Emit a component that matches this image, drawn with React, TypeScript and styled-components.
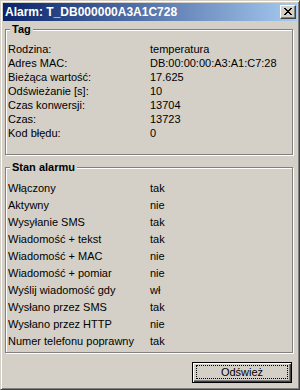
import React from "react";
import styled, { createGlobalStyle } from "styled-components";

const GlobalStyle = createGlobalStyle`
  html, body { margin: 0; padding: 0; background: #d4d0c8; }
  body { font-family: "Liberation Sans", Arial, sans-serif; font-size: 11px; color: #000; }
  * { box-sizing: border-box; }
`;

const Window = styled.div`
  width: 300px;
  height: 390px;
  border: 1px solid;
  border-color: #d4d0c8 #404040 #404040 #d4d0c8;
  box-shadow: inset 1px 1px 0 #fff, inset -1px -1px 0 #808080;
  padding: 2px;
  background: #d4d0c8;
  display: flex;
  flex-direction: column;
`;

const TitleBar = styled.div`
  height: 18px;
  display: flex;
  align-items: center;
  padding: 0 1px 0 2px;
  background: linear-gradient(to right, #0a246a, #a6caf0);
`;

const TitleText = styled.div`
  flex: 1;
  color: #fff;
  font-weight: bold;
  font-size: 12px;
  line-height: 18px;
  white-space: nowrap;
`;

const CloseButton = styled.div`
  width: 16px;
  height: 14px;
  background: #d4d0c8;
  border: 1px solid;
  border-color: #fff #404040 #404040 #fff;
  box-shadow: inset -1px -1px 0 #808080;
  display: flex;
  padding: 2px 0 0 3px;
`;

const Content = styled.div`
  display: flex;
  flex-direction: column;
  padding: 0 4px 0 2px;
`;

const Group = styled.div<{ $top: number; $bottom: number }>`
  margin-top: ${(p) => p.$top}px;
  border: 1px solid #808080;
  box-shadow: inset 1px 1px 0 #fff, 1px 1px 0 #fff;
  padding: 0 2px ${(p) => p.$bottom}px 2px;
  display: flex;
  flex-direction: column;
`;

const Caption = styled.div`
  align-self: flex-start;
  margin: -7px 0 0 2px;
  padding: 0 2px;
  height: 13px;
  line-height: 13px;
  background: #d4d0c8;
  font-weight: bold;
  font-size: 11px;
`;

const Rows = styled.div<{ $h: number }>`
  margin-top: 6px;
  display: grid;
  grid-template-columns: 142px 1fr;
  grid-auto-rows: ${(p) => p.$h}px;
  line-height: ${(p) => p.$h}px;
  white-space: nowrap;
`;

const Cell = styled.div``;

const Footer = styled.div`
  display: flex;
  justify-content: flex-end;
  margin-top: 9px;
  padding-right: 1px;
`;

const Button = styled.div`
  width: 100px;
  height: 21px;
  border: 1px solid #000;
  background: #d4d0c8;
  box-shadow: inset 1px 1px 0 #fff, inset -1px -1px 0 #404040, inset -2px -2px 0 #808080;
  padding: 2px 3px 3px 3px;
  display: flex;
`;

const FocusRing = styled.div`
  flex: 1;
  border: 1px dotted #000;
  display: flex;
  align-items: center;
  justify-content: center;
  line-height: 12px;
`;

const CloseGlyph = () => (
  <svg width="8" height="7" viewBox="0 0 8 7" shapeRendering="crispEdges">
    <path
      fill="#000"
      d="M0 0h2v1H0zM6 0h2v1H6zM1 1h2v1H1zM5 1h2v1H5zM2 2h4v1H2zM3 3h2v1H3zM2 4h4v1H2zM1 5h2v1H1zM5 5h2v1H5zM0 6h2v1H0zM6 6h2v1H6z"
    />
  </svg>
);

const tagRows: [string, string][] = [
  ["Rodzina:", "temperatura"],
  ["Adres MAC:", "DB:00:00:00:A3:A1:C7:28"],
  ["Bieżąca wartość:", "17.625"],
  ["Odświeżanie [s]:", "10"],
  ["Czas konwersji:", "13704"],
  ["Czas:", "13723"],
  ["Kod błędu:", "0"],
];

const alarmRows: [string, string][] = [
  ["Włączony", "tak"],
  ["Aktywny", "nie"],
  ["Wysyłanie SMS", "tak"],
  ["Wiadomość + tekst", "tak"],
  ["Wiadomość + MAC", "nie"],
  ["Wiadomość + pomiar", "nie"],
  ["Wyślij wiadomość gdy", "wł"],
  ["Wysłano przez SMS", "tak"],
  ["Wysłano przez HTTP", "nie"],
  ["Numer telefonu poprawny", "tak"],
];

export default function App() {
  return (
    <>
      <GlobalStyle />
      <Window>
        <TitleBar>
          <TitleText>Alarm: T_DB000000A3A1C728</TitleText>
          <CloseButton>
            <CloseGlyph />
          </CloseButton>
        </TitleBar>
        <Content>
          <Group $top={8} $bottom={14}>
            <Caption>Tag</Caption>
            <Rows $h={14}>
              {tagRows.map(([k, v]) => (
                <React.Fragment key={k}>
                  <Cell>{k}</Cell>
                  <Cell>{v}</Cell>
                </React.Fragment>
              ))}
            </Rows>
          </Group>
          <Group $top={12} $bottom={2}>
            <Caption>Stan alarmu</Caption>
            <Rows $h={17}>
              {alarmRows.map(([k, v]) => (
                <React.Fragment key={k}>
                  <Cell>{k}</Cell>
                  <Cell>{v}</Cell>
                </React.Fragment>
              ))}
            </Rows>
          </Group>
          <Footer>
            <Button>
              <FocusRing>Odśwież</FocusRing>
            </Button>
          </Footer>
        </Content>
      </Window>
    </>
  );
}
